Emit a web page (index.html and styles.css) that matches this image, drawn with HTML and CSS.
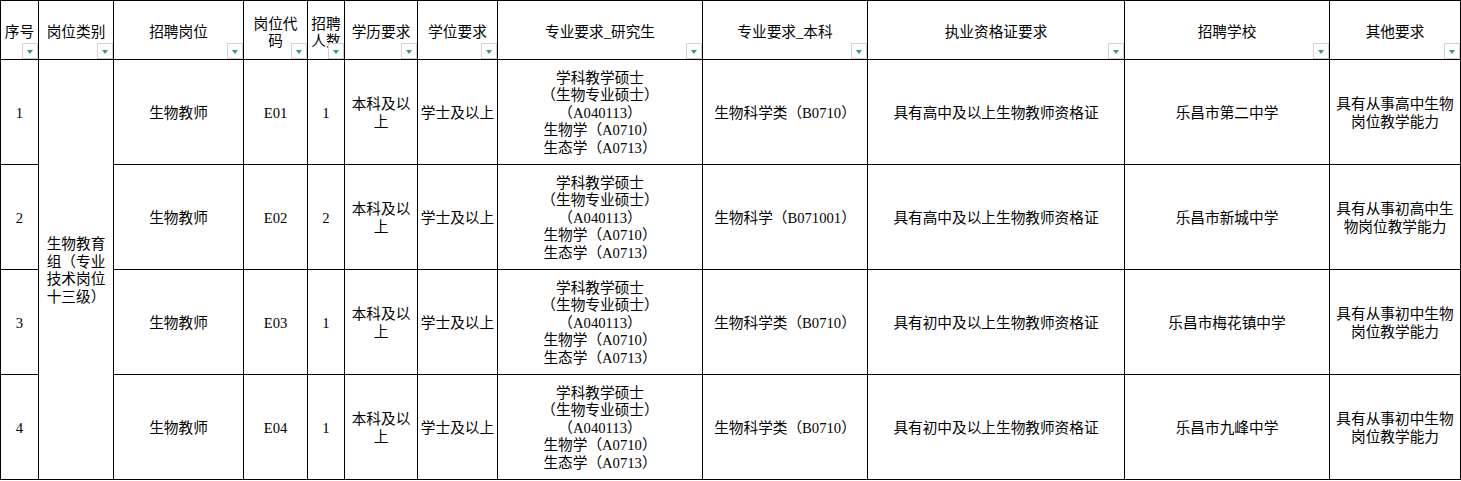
FILE: index.html
```html
<!DOCTYPE html>
<html lang="zh-CN">
<head>
<meta charset="utf-8">
<title>招聘岗位表</title>
<link rel="stylesheet" href="styles.css">
</head>
<body>
<table class="sheet">
  <colgroup>
    <col class="w-seq"><col class="w-cat"><col class="w-pos"><col class="w-code"><col class="w-num">
    <col class="w-edu"><col class="w-deg"><col class="w-grad"><col class="w-ug"><col class="w-cert">
    <col class="w-school"><col class="w-other">
  </colgroup>
  <thead>
    <tr class="head-row">
      <th><span class="h">序号</span><span class="filter"></span></th>
      <th><span class="h">岗位类别</span><span class="filter"></span></th>
      <th><span class="h">招聘岗位</span><span class="filter"></span></th>
      <th><span class="h">岗位代<br>码</span><span class="filter"></span></th>
      <th><span class="h">招聘<br>人数</span><span class="filter"></span></th>
      <th><span class="h">学历要求</span><span class="filter"></span></th>
      <th><span class="h">学位要求</span><span class="filter"></span></th>
      <th><span class="h">专业要求_研究生</span><span class="filter"></span></th>
      <th><span class="h">专业要求_本科</span><span class="filter"></span></th>
      <th><span class="h">执业资格证要求</span><span class="filter"></span></th>
      <th><span class="h">招聘学校</span><span class="filter"></span></th>
      <th><span class="h">其他要求</span><span class="filter"></span></th>
    </tr>
  </thead>
  <tbody>
    <tr class="row">
      <td>1</td>
      <td rowspan="4" class="cat">生物教育组（专业技术岗位十三级）</td>
      <td>生物教师</td>
      <td>E01</td>
      <td>1</td>
      <td>本科及以上</td>
      <td>学士及以上</td>
      <td>学科教学硕士<br>（生物专业硕士）<br>（A040113）<br>生物学（A0710）<br>生态学（A0713）</td>
      <td>生物科学类（B0710）</td>
      <td>具有高中及以上生物教师资格证</td>
      <td>乐昌市第二中学</td>
      <td>具有从事高中生物岗位教学能力</td>
    </tr>
    <tr class="row">
      <td>2</td>
      <td>生物教师</td>
      <td>E02</td>
      <td>2</td>
      <td>本科及以上</td>
      <td>学士及以上</td>
      <td>学科教学硕士<br>（生物专业硕士）<br>（A040113）<br>生物学（A0710）<br>生态学（A0713）</td>
      <td>生物科学（B071001）</td>
      <td>具有高中及以上生物教师资格证</td>
      <td>乐昌市新城中学</td>
      <td>具有从事初高中生物岗位教学能力</td>
    </tr>
    <tr class="row">
      <td>3</td>
      <td>生物教师</td>
      <td>E03</td>
      <td>1</td>
      <td>本科及以上</td>
      <td>学士及以上</td>
      <td>学科教学硕士<br>（生物专业硕士）<br>（A040113）<br>生物学（A0710）<br>生态学（A0713）</td>
      <td>生物科学类（B0710）</td>
      <td>具有初中及以上生物教师资格证</td>
      <td>乐昌市梅花镇中学</td>
      <td>具有从事初中生物岗位教学能力</td>
    </tr>
    <tr class="row">
      <td>4</td>
      <td>生物教师</td>
      <td>E04</td>
      <td>1</td>
      <td>本科及以上</td>
      <td>学士及以上</td>
      <td>学科教学硕士<br>（生物专业硕士）<br>（A040113）<br>生物学（A0710）<br>生态学（A0713）</td>
      <td>生物科学类（B0710）</td>
      <td>具有初中及以上生物教师资格证</td>
      <td>乐昌市九峰中学</td>
      <td>具有从事初中生物岗位教学能力</td>
    </tr>
  </tbody>
</table>
</body>
</html>
```
FILE: styles.css
```css
html, body {
  margin: 0;
  padding: 0;
  background: #ffffff;
}
body {
  font-family: "Liberation Serif", "Noto Sans CJK SC", sans-serif;
  font-size: 14.67px;
  color: #000000;
}
.sheet {
  border-collapse: collapse;
  table-layout: fixed;
  width: 1461px;
}
.sheet th, .sheet td {
  border: 1px solid #000000;
  padding: 3px 2px 0;
  text-align: center;
  vertical-align: middle;
  line-height: 17.5px;
  font-weight: normal;
  overflow: hidden;
}
.w-seq { width: 38px; }
.w-cat { width: 75px; }
.w-pos { width: 130px; }
.w-code { width: 64px; }
.w-num { width: 37px; }
.w-edu { width: 73px; }
.w-deg { width: 80px; }
.w-grad { width: 205px; }
.w-ug { width: 165px; }
.w-cert { width: 257px; }
.w-school { width: 205px; }
.w-other { width: 131px; }

.head-row { height: 59px; }
.head-row th {
  position: relative;
  padding-top: 6px;
}
.h { display: block; }
.filter {
  position: absolute;
  right: 0;
  bottom: 0;
  width: 14px;
  height: 14px;
  border: 1px solid #d4d4d4;
  background: #ffffff;
  box-sizing: content-box;
}
.filter::after {
  content: "";
  position: absolute;
  left: 4px;
  top: 6px;
  border-left: 3.5px solid transparent;
  border-right: 3.5px solid transparent;
  border-top: 4px solid #2f9e72;
}
.row { height: 105px; }
.sheet td.cat { padding: 3px 6px 0; }
```
